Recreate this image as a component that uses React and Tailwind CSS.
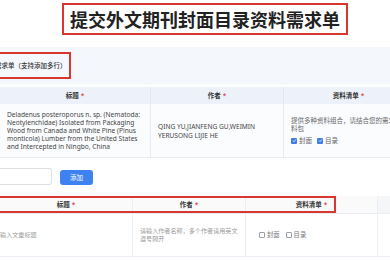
import React from 'react';

const Star = () => <span className="text-[#e5484d] ml-[2px]">*</span>;

const Check = ({ checked }) =>
  checked ? (
    <span className="inline-flex items-center justify-center w-[6px] h-[6px] rounded-[1px] bg-[#3f7ee8]">
      <svg viewBox="0 0 10 10" className="w-[5px] h-[5px]">
        <path d="M2 5.2l2 2 4-4.4" fill="none" stroke="#fff" strokeWidth="1.6" />
      </svg>
    </span>
  ) : (
    <span className="inline-block w-[6px] h-[6px] rounded-[1px] border border-[#9aa0a8] bg-white" />
  );

const Option = ({ label, checked }) => (
  <span className="inline-flex items-center gap-[2px]">
    <Check checked={checked} />
    <span>{label}</span>
  </span>
);

const App = () => {
  return (
    <div className="w-[390px] h-[260px] overflow-hidden bg-white text-[#333] font-['Noto_Sans','Noto_Sans_CJK_SC',sans-serif]">
      {/* title */}
      <div className="pt-[3px] pl-[62px]">
        <div className="w-[286px] h-[32px] border-2 border-[#d8372f] flex items-center justify-center">
          <span className="text-[18px] font-bold text-[#222] font-['Noto_Sans_CJK_SC',sans-serif]">
            提交外文期刊封面目录资料需求单
          </span>
        </div>
      </div>

      {/* section band */}
      <div className="mt-[12px] h-[37px] bg-[#f4f7fc] flex items-center">
        <div className="h-[27px] w-[71px] border-2 border-l-0 border-[#d8372f] flex items-center overflow-hidden">
          <span className="ml-[-5px] whitespace-nowrap text-[6.5px] font-medium text-[#333]">
            需求单（支持添加多行）
          </span>
        </div>
      </div>

      {/* table 1 */}
      <div className="mt-[3px] w-[420px] text-[6.5px]">
        <div className="grid grid-cols-[150px_133px_130px] h-[17px] bg-[#edf2fa] font-semibold text-[#333]">
          <div className="flex items-center justify-center">标题<Star /></div>
          <div className="flex items-center justify-center border-l border-[#e3e8f0]">作者<Star /></div>
          <div className="flex items-center justify-center border-l border-[#e3e8f0]">资料清单<Star /></div>
        </div>
        <div className="grid grid-cols-[150px_133px_130px] h-[54px] bg-[#fbfcfe] border-b border-[#e8ecf2]">
          <div className="flex items-center px-[7px] text-[6.6px] leading-[8px] text-[#444]">
            Deladenus posteroporus n. sp. (Nematoda: Neotylenchidae) Isolated from Packaging Wood from Canada and White Pine (Pinus monticola) Lumber from the United States and Intercepted in Ningbo, China
          </div>
          <div className="flex items-center px-[7px] border-l border-[#e8ecf2] text-[6.6px] leading-[9px] text-[#444]">
            QING YU,JIANFENG GU,WEIMIN YERUSONG LIJIE HE
          </div>
          <div className="flex flex-col justify-center pl-[7px] pr-[8px] border-l border-[#e8ecf2] text-[6.5px] leading-[8px] text-[#666]">
            <div>提供多种资料组合，请结合您的需求资料包</div>
            <div className="flex gap-[5px] mt-[4px]">
              <Option label="封面" checked />
              <Option label="目录" checked />
            </div>
          </div>
        </div>
      </div>

      {/* add row */}
      <div className="mt-[10px] flex items-end gap-[8px]">
        <div className="w-[52px] h-[17px] border border-l-0 border-[#dcdfe6] rounded-r-[3px] bg-white" />
        <button className="w-[33px] h-[15px] rounded-[3px] bg-[#3d82f0] text-white text-[6.5px] flex items-center justify-center">
          添加
        </button>
      </div>

      {/* table 2 */}
      <div className="mt-[11px] w-[420px] text-[6.5px]">
        <div className="relative grid grid-cols-[132px_113px_132px_43px] h-[18px] bg-[#fafafa] font-semibold text-[#333] border-b border-[#ebeef5]">
          <div className="flex items-center justify-center">标题<Star /></div>
          <div className="flex items-center justify-center border-l border-[#ebeef5]">作者<Star /></div>
          <div className="flex items-center justify-center border-l border-[#ebeef5]">资料清单<Star /></div>
          <div className="border-l border-[#ebeef5] bg-[#f5f6f8]" />
          <div className="absolute left-0 top-0 w-[336px] h-full border-2 border-l-0 border-[#d8372f]" />
        </div>
        <div className="grid grid-cols-[132px_113px_132px_43px] h-[43px] border-b border-[#ebeef5] text-[6.1px] leading-[8px] text-[#999]">
          <div className="flex items-center">
            <span className="ml-[-6px] whitespace-nowrap">请输入文章标题</span>
          </div>
          <div className="flex items-center px-[7px] border-l border-[#ebeef5]">
            请输入作者名称，多个作者请用英文逗号隔开
          </div>
          <div className="flex items-center pl-[13px] gap-[6px] border-l border-[#ebeef5] text-[#777] text-[6.3px]">
            <Option label="封面" />
            <Option label="目录" />
          </div>
          <div className="border-l border-[#ebeef5]" />
        </div>
      </div>
    </div>
  );
};

export default App;
